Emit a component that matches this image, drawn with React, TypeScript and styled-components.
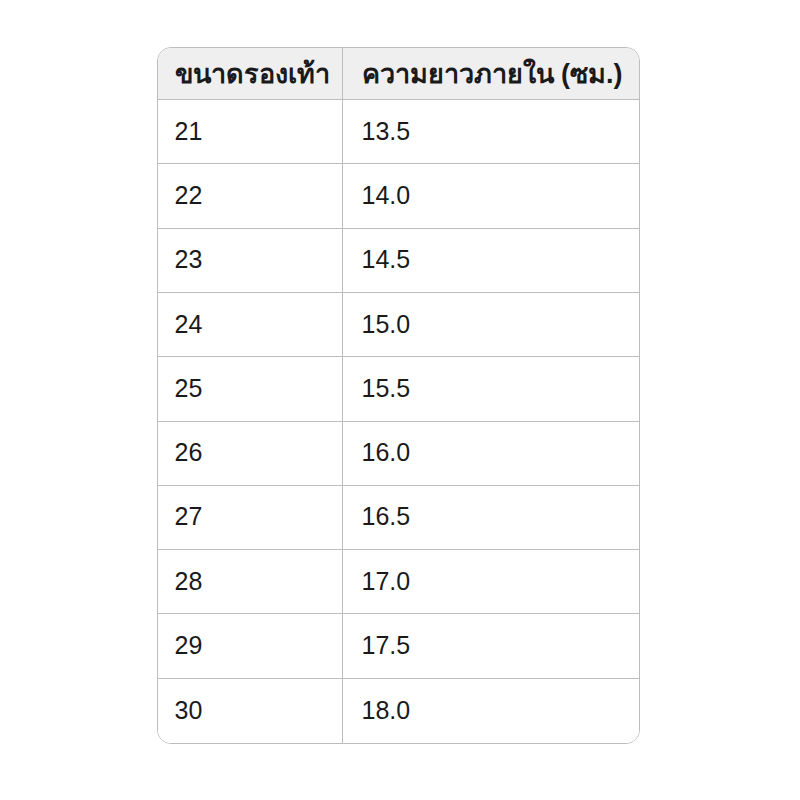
import React from "react";
import styled, { createGlobalStyle } from "styled-components";

const Global = createGlobalStyle`
  html, body { margin: 0; padding: 0; background: #ffffff; }
  body { font-family: "Liberation Sans", "Noto Sans", sans-serif; color: #1f1f1f; }
`;

const Page = styled.div`
  width: 800px;
  height: 800px;
  display: flex;
  justify-content: center;
  padding-top: 47px;
  box-sizing: border-box;
  padding-right: 4px;
`;

const Table = styled.div`
  width: 483px;
  height: 697px;
  box-sizing: border-box;
  border: 1.5px solid #bdbdbf;
  border-radius: 14px;
  overflow: hidden;
  display: grid;
  grid-template-columns: 185px 1fr;
  grid-template-rows: 52px repeat(10, 1fr);
`;

const Cell = styled.div<{ $head?: boolean; $last?: boolean; $right?: boolean }>`
  display: flex;
  align-items: center;
  padding-left: ${(p) => (p.$right ? "19px" : "17px")};
  font-size: ${(p) => (p.$head ? "27px" : "25px")};
  font-weight: ${(p) => (p.$head ? 700 : 400)};
  background: ${(p) => (p.$head ? "#efeff0" : "#ffffff")};
  color: #1a1a1a;
  border-bottom: ${(p) => (p.$last ? "none" : "1.5px solid #bdbdbf")};
  border-right: ${(p) => (p.$right ? "none" : "1.5px solid #bdbdbf")};
  white-space: nowrap;
  padding-bottom: 1px;
`;

const rows: [string, string][] = [
  ["21", "13.5"],
  ["22", "14.0"],
  ["23", "14.5"],
  ["24", "15.0"],
  ["25", "15.5"],
  ["26", "16.0"],
  ["27", "16.5"],
  ["28", "17.0"],
  ["29", "17.5"],
  ["30", "18.0"],
];

export default function App() {
  return (
    <>
      <Global />
      <Page>
        <Table>
          <Cell $head>ขนาดรองเท้า</Cell>
          <Cell $head $right>ความยาวภายใน (ซม.)</Cell>
          {rows.map(([a, b], i) => (
            <React.Fragment key={a}>
              <Cell $last={i === rows.length - 1}>{a}</Cell>
              <Cell $right $last={i === rows.length - 1}>{b}</Cell>
            </React.Fragment>
          ))}
        </Table>
      </Page>
    </>
  );
}
